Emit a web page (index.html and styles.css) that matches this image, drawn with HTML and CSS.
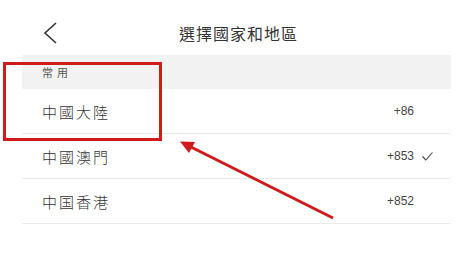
FILE: index.html
```html
<!DOCTYPE html>
<html lang="zh-Hant">
<head>
<meta charset="utf-8">
<title>選擇國家和地區</title>
<link rel="stylesheet" href="styles.css">
</head>
<body>
<div class="page">
  <header class="topbar">
    <svg class="back" width="14" height="22" viewBox="0 0 14 22"><path d="M13 1 L2 11 L13 21" fill="none" stroke="#333" stroke-width="1.6"/></svg>
    <h1 class="title">選擇國家和地區</h1>
  </header>
  <div class="list">
    <div class="section">常用</div>
    <div class="row"><span class="name">中國大陸</span><span class="code">+86</span><span class="mark"></span></div>
    <div class="row"><span class="name">中國澳門</span><span class="code">+853</span><span class="mark"><svg width="11" height="9" viewBox="0 0 11 9"><path d="M0.5 4.5 L3.8 8 L10.5 0.5" fill="none" stroke="#444" stroke-width="1.1"/></svg></span></div>
    <div class="row"><span class="name">中国香港</span><span class="code">+852</span><span class="mark"></span></div>
  </div>
  <svg class="annot" width="475" height="270" viewBox="0 0 475 270">
    <rect x="4.5" y="63.5" width="156" height="76" fill="none" stroke="#d11a1a" stroke-width="3"/>
    <line x1="333" y1="218" x2="188" y2="145.5" stroke="#d11a1a" stroke-width="3"/>
    <polygon points="180,141.5 195,142 189,153" fill="#d11a1a"/>
  </svg>
</div>
</body>
</html>
```
FILE: styles.css
```css
html, body {
  margin: 0;
  padding: 0;
  background: #fff;
}
.page {
  position: relative;
  width: 475px;
  height: 270px;
  overflow: hidden;
  font-family: "Noto Sans CJK TC", "Noto Sans CJK SC", "Liberation Sans", sans-serif;
  color: #333;
}
.topbar {
  height: 55px;
  position: relative;
  display: flex;
  align-items: center;
  justify-content: center;
}
.back {
  position: absolute;
  left: 43px;
  top: 22px;
}
.title {
  margin: 0 0 0 2px;
  font-size: 16px;
  font-weight: 400;
  letter-spacing: 1px;
  color: #333;
  line-height: 1;
  padding-bottom: 0;
  transform: translateY(5px);
}
.list {
  margin-left: 22px;
  width: 429px;
}
.section {
  height: 34px;
  background: #f2f2f2;
  padding-left: 20px;
  font-size: 11px;
  letter-spacing: 4px;
  color: #555;
  line-height: 34px;
}
.row {
  height: 44px;
  border-bottom: 1px solid #ebebeb;
  display: flex;
  align-items: center;
  padding-left: 20px;
}
.name {
  flex: 1;
  font-size: 15px;
  letter-spacing: 2px;
  color: #333;
  font-weight: 300;
}
.code {
  font-family: "Liberation Sans Narrow", "Liberation Sans", sans-serif;
  font-size: 12px;
  color: #444;
}
.mark {
  width: 37px;
  display: flex;
  align-items: center;
  padding-left: 8px;
  box-sizing: border-box;
}
.annot {
  position: absolute;
  left: 0;
  top: 0;
  pointer-events: none;
}
```
